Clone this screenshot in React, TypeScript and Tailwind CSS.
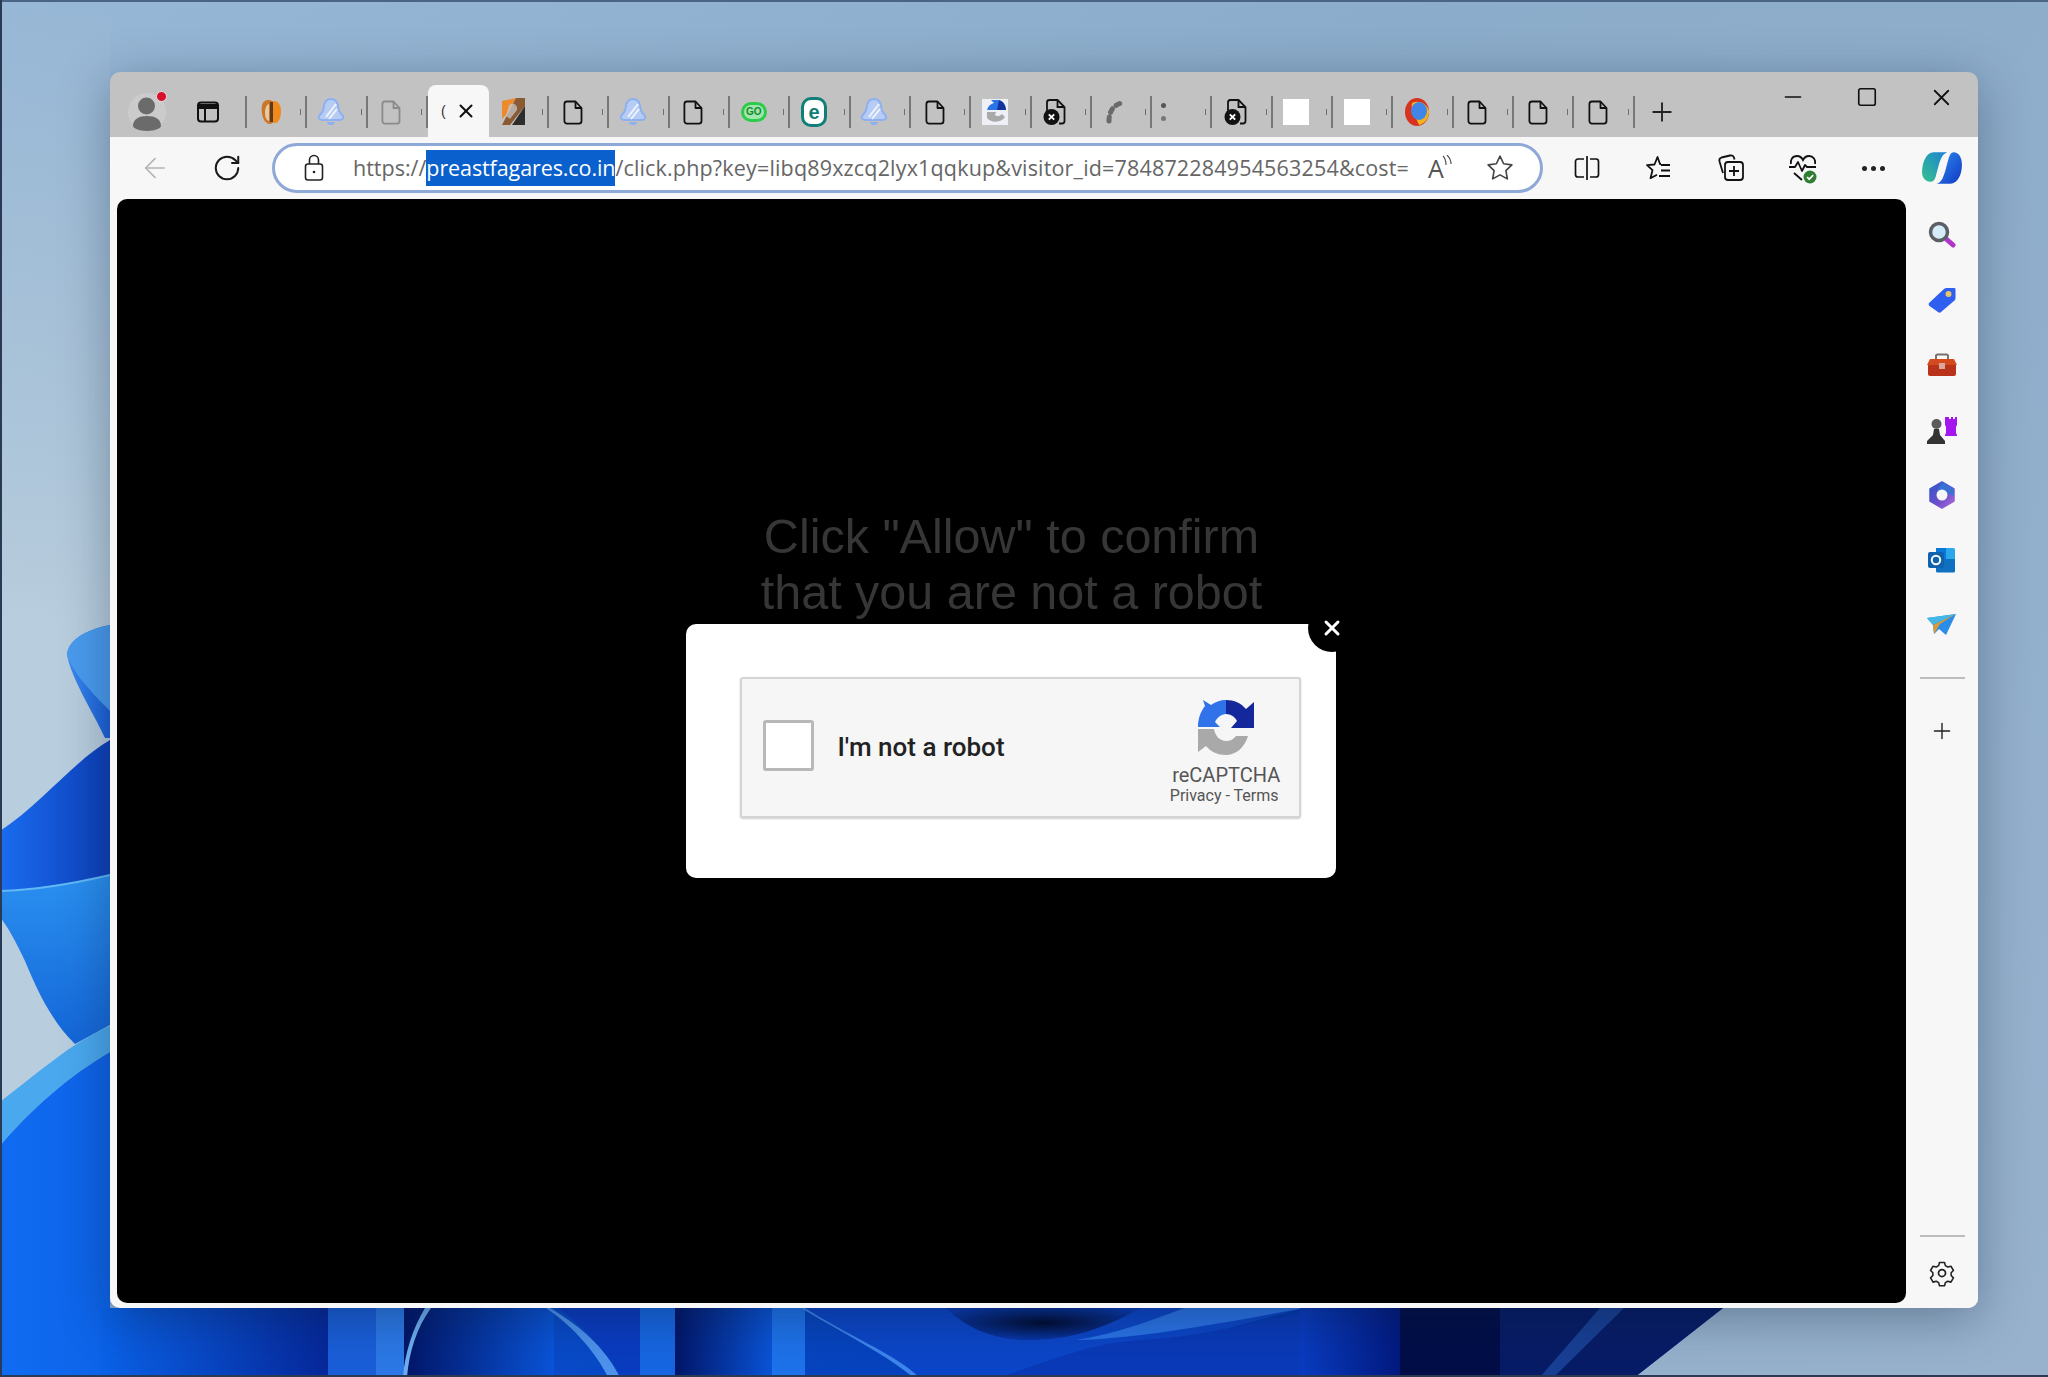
import { ArrowLeft, Minus, Plus, RotateCw, Square, X } from 'lucide-react';
import type { ReactNode } from 'react';

const PageIcon = ({ color = '#111' }: { color?: string }) => (
  <svg width="20" height="25" viewBox="0 0 20 25" fill="none" stroke={color} strokeWidth="1.8" strokeLinejoin="round">
    <path d="M4 1.500h8.500l6 6.500v13a2.600 2.600 0 0 1-2.600 2.600H4A2.600 2.600 0 0 1 1.400 21V4A2.600 2.600 0 0 1 4 1.500z" />
    <path d="M12.500 1.500V8h6" />
  </svg>
);

const BellIcon = () => (
  <svg width="28" height="30" viewBox="0 0 28 30">
    <path d="M14 2c5 0 7 4 7.400 9 .3 4 2.600 6 4.600 8 1 2-.5 3.500-3 4H5c-2.500-.5-4-2-3-4 2-2 4.300-4 4.600-8C7 6 9 2 14 2z" fill="#b7ccf4" stroke="#8fb0ef" strokeWidth="2" />
    <path d="M9 20 19 7M12 22l8-10" stroke="#eef3fd" strokeWidth="2" />
    <path d="M10 25h8a4 3 0 0 1-8 0z" fill="#8fb0ef" />
  </svg>
);

const ErrorPageIcon = () => (
  <svg width="24" height="28" viewBox="0 0 24 28" fill="none">
    <path d="M4 13V4.500A2.500 2.500 0 0 1 6.500 2h8l7 7v14a2.500 2.500 0 0 1-2.500 2.500h-3" stroke="#111" strokeWidth="1.800" />
    <path d="M14.500 2v7h7" stroke="#111" strokeWidth="1.800" />
    <circle cx="8.500" cy="19" r="8" fill="#111" />
    <path d="m5.800 16.300 5.400 5.400m0-5.400-5.400 5.400" stroke="#fff" strokeWidth="1.800" />
  </svg>
);

const favicons: ReactNode[] = [
  <svg width="22" height="28" viewBox="0 0 22 28" key="moth">
    <path d="M8 2C2 2 1 9 2 15c1 7 4 11 8 11 3 0 4-3 4-6V6c0-3-3-4-6-4z" fill="#c9762a" />
    <path d="M14 3c4 0 7 4 7 10s-2 12-6 12c-2 0-3-2-3-5V6c0-2 1-3 2-3z" fill="#f08a1d" />
    <path d="M9 6c-3 1-4 5-4 9s1 7 4 8z" fill="#e8c9a0" />
    <path d="M10 4h3v20h-3z" fill="#5b3a1e" />
  </svg>,
  <BellIcon key="bell1" />,
  <PageIcon color="#8a8a8a" key="page-grey" />,
  null,
  <svg width="26" height="30" viewBox="0 0 26 30" key="brush">
    <path d="M2 4 16 1 6 18l-4 4z" fill="#ed8a2c" />
    <path d="M16 1h9v8L10 28H2z" fill="#8a5a35" />
    <path d="M25 9v19H12z" fill="#2d2d2d" />
    <path d="M9 8c4-3 9 0 8 5l-7 9-4-3z" fill="#c7c7c7" opacity=".75" />
  </svg>,
  <PageIcon key="page1" />,
  <BellIcon key="bell2" />,
  <PageIcon key="page2" />,
  <div key="go" className="flex h-[20px] w-[26px] items-center justify-center rounded-full border-[3px] border-[#2ecb4b] bg-[#9fe7ac] font-['Liberation_Sans',sans-serif] text-[10px] font-bold leading-none text-[#168a2c]">GO</div>,
  <div key="eset" className="flex h-[30px] w-[26px] items-center justify-center rounded-[10px] border-[3px] border-[#0f7f78] bg-white font-['Liberation_Sans',sans-serif] text-[20px] font-bold leading-none text-[#0f7f78]">e</div>,
  <BellIcon key="bell3" />,
  <PageIcon key="page3" />,
  <svg width="26" height="26" viewBox="0 0 26 26" key="captcha">
    <path d="M0 0h26v26H0z" fill="#eef0f6" />
    <path d="M5 13C5 8 8 5 12 4L9 1h8v10H5z" fill="#2a74e8" />
    <path d="M17 1c4 1 7 5 7 10h-9z" fill="#12329c" />
    <path d="M5 13h9l-1 3c2 2 5 1 7-1l3 3c-3 5-13 7-18 1z" fill="#a9a9a9" />
  </svg>,
  <ErrorPageIcon key="err1" />,
  <svg width="20" height="26" viewBox="0 0 20 26" fill="none" key="arc">
    <path d="M3 22c0-8 3-15 12-18" stroke="#6a6a6a" strokeWidth="5" strokeLinecap="round" strokeDasharray="4 5" />
  </svg>,
  <div key="dots" className="mr-[24px] flex flex-col gap-[8px]"><span className="size-[5px] rounded-full bg-[#555]" /><span className="size-[5px] rounded-full bg-[#777]" /></div>,
  <ErrorPageIcon key="err2" />,
  <div key="white1" className="h-[26px] w-[26px] bg-white" />,
  <div key="white2" className="h-[26px] w-[26px] bg-white" />,
  <svg width="26" height="30" viewBox="0 0 26 30" key="ball">
    <ellipse cx="13" cy="15" rx="12" ry="14" fill="#d8331f" />
    <path d="M8 6c6-3 15 0 17 8 0 8-5 13-10 14 -2-6-9-15-7-22z" fill="#f2b31d" />
    <ellipse cx="15" cy="14" rx="8" ry="9" fill="#3f86e8" />
  </svg>,
  <PageIcon key="page4" />,
  <PageIcon key="page5" />,
  <PageIcon key="page6" />,
];

function Tab({ icon, active }: { icon: ReactNode; active: boolean }) {
  if (active) {
    return (
      <div className="relative -mt-[2px] flex h-[52px] w-[61px] shrink-0 items-center rounded-t-[8px] bg-[#f7f7f7] pl-[13px]">
        <span className="font-['Liberation_Sans',sans-serif] text-[14px] leading-none text-[#333]">(</span>
        <X className="ml-[9px] size-[22px] text-[#111]" strokeWidth={2.200} />
      </div>
    );
  }
  return (
    <div className="relative flex h-[32px] w-[60.300px] shrink-0 items-center justify-center">
      <div className="pr-[13px]">{icon}</div>
      <span className="absolute right-[6px] top-[13px] h-[6px] w-px bg-[#6f6f6f]" />
      <span className="absolute right-0 top-0 h-[32px] w-[2px] bg-[#777]" />
    </div>
  );
}

function TabStrip() {
  return (
    <div className="relative flex h-[65px] items-center bg-[#c2c2c2] pt-[15px]">
      <div className="flex w-[74px] shrink-0 justify-center">
        <div className="relative flex size-[38px] items-end justify-center rounded-full bg-[#cbcbcb]">
          <svg width="30" height="36" viewBox="0 0 30 36" fill="#6b6b6b">
            <circle cx="14.500" cy="11" r="8.500" />
            <path d="M1 31c0-7 6-10 14-10s14 3 14 10c0 2-6 5-14 5S1 33 1 31z" />
          </svg>
          <span className="absolute -right-[1px] -top-[2px] size-[11px] rounded-full border border-[#e6e6e6] bg-[#d8102a]" />
        </div>
      </div>
      <div className="flex w-[48px] shrink-0 justify-center">
        <svg width="24" height="24" viewBox="0 0 24 24" fill="none" stroke="#111" strokeWidth="2">
          <rect x="2" y="2.500" width="20" height="19" rx="3" />
          <path d="M2 6.500h20" strokeWidth="5" />
          <path d="M9 8v13" />
        </svg>
      </div>
      <div className="ml-[13px] flex items-center">
        <span className="h-[32px] w-[2px] bg-[#777]" />
        {favicons.map((icon, i) => (
          <Tab key={i} icon={icon} active={i === 3} />
        ))}
      </div>
      <div className="flex w-[54px] shrink-0 justify-center">
        <Plus className="size-[30px] text-[#222]" strokeWidth={1.500} />
      </div>
      <div className="absolute right-0 top-0 flex h-[50px] items-center text-[#111]">
        <div className="flex w-[74px] justify-center"><Minus className="size-[26px]" strokeWidth={1.500} /></div>
        <div className="flex w-[74px] justify-center"><Square className="size-[22px]" strokeWidth={1.800} /></div>
        <div className="flex w-[74px] justify-center"><X className="size-[27px]" strokeWidth={1.600} /></div>
      </div>
    </div>
  );
}

const ToolCell = ({ children }: { children: ReactNode }) => (
  <div className="flex h-[50px] w-[72px] shrink-0 items-center justify-center">{children}</div>
);

function Toolbar() {
  return (
    <div className="flex h-[62px] items-center bg-[#f7f7f7] pl-[9px]">
      <ToolCell><ArrowLeft className="size-[32px] text-[#b4b4b4]" strokeWidth={1.200} /></ToolCell>
      <ToolCell><RotateCw className="size-[30px] text-[#1a1a1a]" strokeWidth={1.600} /></ToolCell>
      <div className="ml-[9px] flex h-[50px] w-[1271px] shrink-0 items-center rounded-full border-[3px] border-[#8ea8d8] bg-white">
        <div className="flex w-[78px] shrink-0 justify-center">
          <svg width="20" height="28" viewBox="0 0 20 28" fill="none" stroke="#222" strokeWidth="1.600">
            <rect x="1.500" y="10" width="17" height="16" rx="2.500" />
            <path d="M5.500 10V6a4.500 4.500 0 0 1 9 0v4" />
            <circle cx="10" cy="18" r="1.300" fill="#222" stroke="none" />
          </svg>
        </div>
        <div className="min-w-0 flex-1 overflow-hidden whitespace-nowrap font-['Open_Sans',sans-serif] text-[21.500px] leading-[36px] tracking-[0.170px] text-[#666]">
          <span className="tracking-normal">https://</span><span className="inline-block bg-[#0a60cc] tracking-[-0.100px] text-white">preastfagares.co.in</span>/click.php?key=libq89xzcq2lyx1qqkup&amp;visitor_id=784872284954563254&amp;cost=
        </div>
        <div className="flex w-[52px] shrink-0 justify-center">
          <span className="relative font-['Open_Sans',sans-serif] text-[25px] leading-none text-[#555]">
            A
            <svg className="absolute -right-[8px] -top-[1px]" width="10" height="12" viewBox="0 0 10 12" fill="none" stroke="#555" strokeWidth="1.200">
              <path d="M1 1c2 2 3 5 3 9M5 0c2 2 4 5 4 9" />
            </svg>
          </span>
        </div>
        <div className="flex w-[78px] shrink-0 justify-center pr-[2px]">
          <svg width="30" height="30" viewBox="0 0 24 24" fill="none" stroke="#444" strokeWidth="1.300" strokeLinejoin="round">
            <path d="m12 2.500 2.900 6.100 6.600.9-4.800 4.600 1.200 6.600L12 17.500l-5.900 3.200 1.200-6.600L2.500 9.500l6.600-.9z" />
          </svg>
        </div>
      </div>
      <div className="ml-[8px] flex items-center">
        <ToolCell>
          <svg width="28" height="28" viewBox="0 0 28 28" fill="none" stroke="#111" strokeWidth="1.700">
            <path d="M11 5H5a2.500 2.500 0 0 0-2.500 2.500v13A2.500 2.500 0 0 0 5 23h6M17 5h6a2.500 2.500 0 0 1 2.500 2.500v13A2.500 2.500 0 0 1 23 23h-6M14 2v24" />
          </svg>
        </ToolCell>
        <ToolCell>
          <svg width="30" height="30" viewBox="0 0 30 30" fill="none" stroke="#111" strokeWidth="1.800" strokeLinejoin="round">
            <path d="M17 11h-1l-2.500-7-3 7.500-7.500.7 5.500 5-2 8 6.500-3.500" />
            <path d="M17 12h9M17 17.500h9M15 23h11" />
          </svg>
        </ToolCell>
        <ToolCell>
          <svg width="30" height="30" viewBox="0 0 30 30" fill="none" stroke="#111" strokeWidth="1.800" strokeLinejoin="round">
            <path d="M7 20 3.500 8.500c-.5-2 .5-3.500 2-4L14 2.500c2-.5 3.500.5 4 2l.5 2" />
            <rect x="9" y="9" width="18" height="18" rx="3" />
            <path d="M18 13v10M13 18h10" />
          </svg>
        </ToolCell>
        <ToolCell>
          <svg width="34" height="34" viewBox="0 0 34 34" fill="none">
            <path d="M5 13c-1-4 1.500-8 6-8 3 0 5 2 6 4 1-2 3-4 6-4 4.500 0 7 4 6 8" stroke="#111" strokeWidth="1.800" />
            <path d="M3 16h6l3-5 4 9 3-6 2 2h9" stroke="#111" strokeWidth="1.800" strokeLinejoin="round" />
            <path d="m8 22 8 7" stroke="#111" strokeWidth="1.800" />
            <circle cx="24" cy="26" r="6.500" fill="#2f7d32" />
            <path d="m21 26 2.200 2.200 4-4" stroke="#fff" strokeWidth="1.700" />
          </svg>
        </ToolCell>
        <div className="-ml-[2px] flex h-[50px] w-[72px] shrink-0 items-center justify-center gap-[4px]">
          <span className="size-[5px] rounded-full bg-[#222]" />
          <span className="size-[5px] rounded-full bg-[#222]" />
          <span className="size-[5px] rounded-full bg-[#222]" />
        </div>
        <div className="flex w-[66px] shrink-0 justify-center">
          <svg width="42" height="38" viewBox="0 0 40 36">
            <defs>
              <linearGradient id="cop1" x1="0" y1="1" x2="1" y2="0">
                <stop offset="0" stopColor="#35c28c" />
                <stop offset="1" stopColor="#1c7fd6" />
              </linearGradient>
              <linearGradient id="cop2" x1="0" y1="0" x2="1" y2="1">
                <stop offset="0" stopColor="#2d8df0" />
                <stop offset="1" stopColor="#1238c4" />
              </linearGradient>
            </defs>
            <path d="M12 3h13c-5 2-6 6-8 12l-3 11c-1 3-2 5-5 5-5 0-8-4-8-9 0-9 4-19 11-19z" fill="url(#cop1)" />
            <path d="M28 33H15c5-2 6-6 8-12l3-11c1-3 2-7 5-7 5 0 8 5 8 12 0 9-4 18-11 18z" fill="url(#cop2)" />
          </svg>
        </div>
      </div>
    </div>
  );
}

const sideIcons: ReactNode[] = [
  <svg width="28" height="28" viewBox="0 0 28 28" key="search">
    <path d="m16 16 9 8" stroke="#b136c8" strokeWidth="5" strokeLinecap="round" />
    <circle cx="11" cy="11" r="8.500" fill="#d6ebf8" stroke="#5a5f66" strokeWidth="3.500" />
  </svg>,
  <svg width="28" height="28" viewBox="0 0 28 28" key="tag">
    <path d="M1 17 16 3c1-1 2-1 3-1h7c1 0 1.500.5 1.500 1.500V12c0 1-.5 2-1 2.500L13 26c-1 1-2 1-3 0L1.500 20c-1-1-1-2-.5-3z" fill="#2f5ff0" />
    <circle cx="20.500" cy="8" r="3" fill="#e9c46a" />
  </svg>,
  <svg width="30" height="24" viewBox="0 0 30 24" key="toolbox">
    <path d="M9 6V3a1.500 1.500 0 0 1 1.500-1.500h9A1.500 1.500 0 0 1 21 3v3" fill="none" stroke="#77716c" strokeWidth="2" />
    <path d="M3 6h24l3 6H0z" fill="#d5491f" />
    <path d="M1 12h28v9a2 2 0 0 1-2 2H3a2 2 0 0 1-2-2z" fill="#b8331a" />
    <rect x="12" y="10" width="6" height="6" fill="#d8a99b" />
  </svg>,
  <svg width="30" height="28" viewBox="0 0 30 28" key="chess">
    <path d="M20 1h2v2h2V1h2v2h2V1h2v8l-1 2v6l1 2v1H18v-1l1-2v-6l-1-2V1z" fill="#a416ee" />
    <circle cx="9.500" cy="8" r="5" fill="#5b5b5b" />
    <path d="M7 13h5l1 6 5 6v3H0v-3l6-6z" fill="#333" />
  </svg>,
  <svg width="28" height="28" viewBox="0 0 28 28" key="m365">
    <defs>
      <linearGradient id="m1" x1="0" y1="0" x2="1" y2="1">
        <stop offset="0" stopColor="#2d55c8" />
        <stop offset=".55" stopColor="#6a4fcc" />
        <stop offset="1" stopColor="#b06ad8" />
      </linearGradient>
    </defs>
    <path d="M14 1 26 8v12l-12 7-12-7V8z" fill="url(#m1)" stroke="url(#m1)" strokeWidth="1.500" strokeLinejoin="round" />
    <path d="M14 1 26 8v7l-7-3-5-3-6 3z" fill="#2f78d4" opacity=".8" />
    <circle cx="14" cy="14" r="5.500" fill="#f7f7f7" />
  </svg>,
  <svg width="28" height="26" viewBox="0 0 28 26" key="outlook">
    <rect x="8" y="1" width="19" height="24" rx="1.500" fill="#28a8ea" />
    <path d="M8 12h19v12a1.500 1.500 0 0 1-1.500 1.500H9.500A1.500 1.500 0 0 1 8 24z" fill="#0f6fc0" />
    <path d="M8 1h10v11H8z" fill="#0a78d4" />
    <rect x="0" y="5" width="16" height="16" rx="2" fill="#0f62ae" />
    <circle cx="8" cy="13" r="4.200" fill="none" stroke="#fff" strokeWidth="2" />
  </svg>,
  <svg width="30" height="22" viewBox="0 0 30 22" key="send">
    <path d="M0 4 29 0 19 21l-7-6-5 5-1-9z" fill="#2a8de8" />
    <path d="M0 4 29 0 6 11z" fill="#44b6e8" />
    <path d="M29 0 6 11l1 9 6-10z" fill="#d69b3d" />
  </svg>,
];

function Sidebar() {
  return (
    <aside className="flex w-[72px] shrink-0 flex-col items-center bg-[#f7f7f7] pb-[20px] pt-[3px]">
      {sideIcons.map((icon, i) => (
        <div key={i} className="flex h-[65px] w-full items-center justify-center">{icon}</div>
      ))}
      <div className="mt-[20px] h-[2px] w-[45px] bg-[#bdbdbd]" />
      <div className="mt-[28px] flex h-[48px] items-center justify-center">
        <Plus className="size-[26px] text-[#222]" strokeWidth={1.300} />
      </div>
      <div className="mt-auto h-[2px] w-[45px] bg-[#bdbdbd]" />
      <div className="mt-[21px] flex h-[30px] items-center justify-center">
        <svg width="28" height="28" viewBox="0 0 24 24" fill="none" stroke="#222" strokeWidth="1.500" strokeLinejoin="round">
          <path d="M9.600 2h4.800l.8 3 2.300 1.300 3-.8 2.400 4.100-2.200 2.200v2.600l2.200 2.200-2.400 4.100-3-.8-2.300 1.300-.8 3H9.600l-.8-3-2.300-1.300-3 .8-2.400-4.100 2.200-2.200v-2.600L1.100 9.600l2.400-4.100 3 .8 2.300-1.300z" transform="translate(12 12) scale(.9) translate(-12 -12)" />
          <circle cx="12" cy="12" r="3" />
        </svg>
      </div>
    </aside>
  );
}

const RecaptchaLogo = () => (
  <svg width="57" height="56" viewBox="0 0 57 56">
    <path d="M0 27C0 18 3 11 7 6L5 0l8 5C17 2 22 0 28 0v14c-5 0-9 4-11 8l5 5z" fill="#2f72ea" />
    <path d="M28 0c8 0 15 3 20 9l8-7v26H33l6-7c-2-4-6-7-11-7z" fill="#14289c" />
    <path d="M0 29h16c1 7 6 12 12 12 4 0 8-2 10-5h12C47 47 38 55 28 55c-8 0-15-3-20-9l-8 6z" fill="#a9a9a9" />
  </svg>
);

function CaptchaModal() {
  return (
    <div className="relative h-[254px] w-[650px] rounded-[10px] bg-white pl-[54px] pt-[53px]">
      <h1 className="absolute bottom-full left-1/2 mb-[4px] ml-[1px] -translate-x-1/2 whitespace-nowrap text-center font-['Liberation_Sans',sans-serif] text-[48.500px] font-normal leading-[56px] text-[#363636]">
        Click "Allow" to confirm
        <br />
        that you are not a robot
      </h1>
      <div className="absolute -right-[20px] -top-[20px] flex size-[48px] items-center justify-center rounded-full bg-black">
        <X className="size-[24px] text-white" strokeWidth={3} />
      </div>
      <div className="flex h-[141px] w-[561px] items-center rounded-[3px] border-2 border-[#d4d4d4] bg-[#f6f6f6] pl-[21px] pr-[16px] shadow-[0_1px_2px_rgba(0,0,0,0.2)]">
        <div className="mb-[5px] size-[51px] shrink-0 rounded-[3px] border-[3px] border-[#b8b8b8] bg-white" />
        <span className="mb-[2px] ml-[24px] font-['Roboto',sans-serif] text-[26px] font-medium leading-none text-[#222]">I'm not a robot</span>
        <div className="ml-auto flex flex-col items-center pt-[10px] font-['Roboto',sans-serif] text-[#555]">
          <RecaptchaLogo />
          <span className="mt-[7px] text-[20px] leading-[24px]">reCAPTCHA</span>
          <span className="pr-[4px] text-[16px] leading-[18px]">Privacy - Terms</span>
        </div>
      </div>
    </div>
  );
}

function Wallpaper() {
  return (
    <svg className="absolute inset-0" width="2048" height="1377" viewBox="0 0 2048 1377">
      <defs>
        <linearGradient id="sky" x1="0" y1="0" x2="1" y2="1">
          <stop offset="0" stopColor="#97b7d6" />
          <stop offset=".35" stopColor="#8bacca" />
          <stop offset="1" stopColor="#98b2cd" />
        </linearGradient>
        <linearGradient id="left" x1="0" y1="0" x2="0" y2="1">
          <stop offset="0" stopColor="#b8cddd" stopOpacity="0" />
          <stop offset=".45" stopColor="#b8cddd" />
          <stop offset="1" stopColor="#b8cddd" />
        </linearGradient>
        <linearGradient id="b1" x1="0" y1="0" x2="1" y2="0">
          <stop offset="0" stopColor="#3a8cf0" />
          <stop offset="1" stopColor="#1c5fd8" />
        </linearGradient>
        <linearGradient id="b2" x1="0" y1="0" x2="1" y2="0">
          <stop offset="0" stopColor="#1a6cf0" />
          <stop offset="1" stopColor="#0d3fb8" />
        </linearGradient>
        <linearGradient id="b3" x1="0" y1="0" x2="0" y2="1">
          <stop offset="0" stopColor="#2a90f0" />
          <stop offset="1" stopColor="#1466d8" />
        </linearGradient>
        <linearGradient id="b4" x1="0" y1="0" x2="1" y2="0">
          <stop offset="0" stopColor="#0f6cf2" />
          <stop offset=".2" stopColor="#0a4fd0" />
          <stop offset="1" stopColor="#0030a0" />
        </linearGradient>
        <linearGradient id="s1" x1="0" y1="0" x2="1" y2="0">
          <stop offset="0" stopColor="#0a62e8" />
          <stop offset="1" stopColor="#06289a" />
        </linearGradient>
        <linearGradient id="s2" x1="0" y1="0" x2="1" y2="0">
          <stop offset="0" stopColor="#021668" />
          <stop offset="1" stopColor="#0a54d8" />
        </linearGradient>
        <linearGradient id="s3" x1="0" y1="0" x2="1" y2="0">
          <stop offset="0" stopColor="#0a3cc0" />
          <stop offset="1" stopColor="#021a80" />
        </linearGradient>
        <radialGradient id="hole" cx=".5" cy=".45" r=".6">
          <stop offset="0" stopColor="#010c30" />
          <stop offset="1" stopColor="#0a3cb8" />
        </radialGradient>
      </defs>
      <rect width="2048" height="1377" fill="url(#sky)" />
      <rect x="0" y="0" width="110" height="1377" fill="url(#left)" />
      <path d="M110 625C85 630 68 640 67 655c5 25 25 55 38 83h5z" fill="url(#b1)" />
      <path d="M110 625C85 630 68 640 67 655c6 18 25 38 43 56z" fill="#4a9bee" />
      <path d="M110 740V875C70 884 30 890 0 891V831C40 805 75 760 110 740z" fill="url(#b2)" />
      <path d="M0 891C40 890 80 882 110 875v150l-35 19C50 1020 35 985 25 961 15 940 8 927 0 917z" fill="url(#b3)" />
      <path d="M0 891C40 890 80 882 110 875" fill="none" stroke="#62b8f5" strokeWidth="2" />
      <path d="M0 1102C35 1075 75 1040 110 1026v26C70 1075 30 1110 0 1146z" fill="#4aa8ee" />
      <path d="M0 1146C30 1110 70 1075 110 1052V1308H1723L1635 1377H0z" fill="url(#b4)" />

      <rect x="100" y="1308" width="228" height="69" fill="url(#s1)" />
      <rect x="328" y="1308" width="48" height="69" fill="#1a5ed8" />
      <path d="M376 1308h54c-14 20-24 44-26 69h-28z" fill="#2b78e6" />
      <rect x="404" y="1308" width="150" height="69" fill="url(#s2)" />
      <path d="M425 1308c-12 20-20 44-22 69h4c2-25 10-50 24-69z" fill="#6eaef0" />
      <path d="M550 1308c34 20 58 44 70 69h-12c-12-24-34-50-62-69z" fill="#4d92ec" />
      <path d="M620 1377c-12-24-36-50-62-69h82v69z" fill="#0a3cc0" />
      <rect x="640" y="1308" width="35" height="69" fill="#1766e2" />
      <rect x="675" y="1308" width="97" height="69" fill="url(#s2)" />
      <rect x="772" y="1308" width="33" height="69" fill="#1e72ea" />
      <path d="M805 1308h141c34 34 94 32 195 0h163c-80 20-170 50-240 69H919z" fill="#0c46c8" />
      <path d="M805 1308c40 26 90 46 114 69h-6c-30-24-70-44-112-69z" fill="#3d86ec" />
      <path d="M946 1308c24 24 56 34 92 32 40-2 70-14 103-32z" fill="url(#hole)" />
      <path d="M1076 1340c60-2 120-12 228-32h-120c-36 14-70 26-108 32z" fill="#2a73e6" />
      <path d="M1000 1377c50-16 90-34 140-37 60-2 130-22 190-32h30v69z" fill="#0a3ab8" />
      <rect x="1300" y="1308" width="100" height="69" fill="url(#s3)" />
      <path d="M1400 1308h100v69h-100z" fill="#020e48" />
      <path d="M1500 1308h223l-88 69h-135z" fill="#071c66" />
      <path d="M1600 1308h24l-70 69h-14z" fill="#1f4ea8" opacity=".7" />

      <rect x="0" y="0" width="2048" height="2" fill="#4a6486" />
      <rect x="0" y="0" width="2" height="1377" fill="#2a3a55" />
      <rect x="0" y="1375" width="2048" height="2" fill="#2a3a55" />
    </svg>
  );
}

export default function App() {
  return (
    <div className="relative h-screen w-screen overflow-hidden bg-[#8bacca]">
      <Wallpaper />
      <div className="relative pl-[110px] pt-[72px]">
        <div className="flex h-[1236px] w-[1868px] flex-col overflow-hidden rounded-[10px] shadow-[0_10px_50px_rgba(10,25,50,0.35)]">
          <TabStrip />
          <Toolbar />
          <div className="flex min-h-0 flex-1 bg-[#f7f7f7] pl-[7px]">
            <main className="mb-[5px] flex w-[1789px] shrink-0 items-center justify-center rounded-[10px] bg-black pr-[2px]">
              <CaptchaModal />
            </main>
            <Sidebar />
          </div>
        </div>
      </div>
    </div>
  );
}
